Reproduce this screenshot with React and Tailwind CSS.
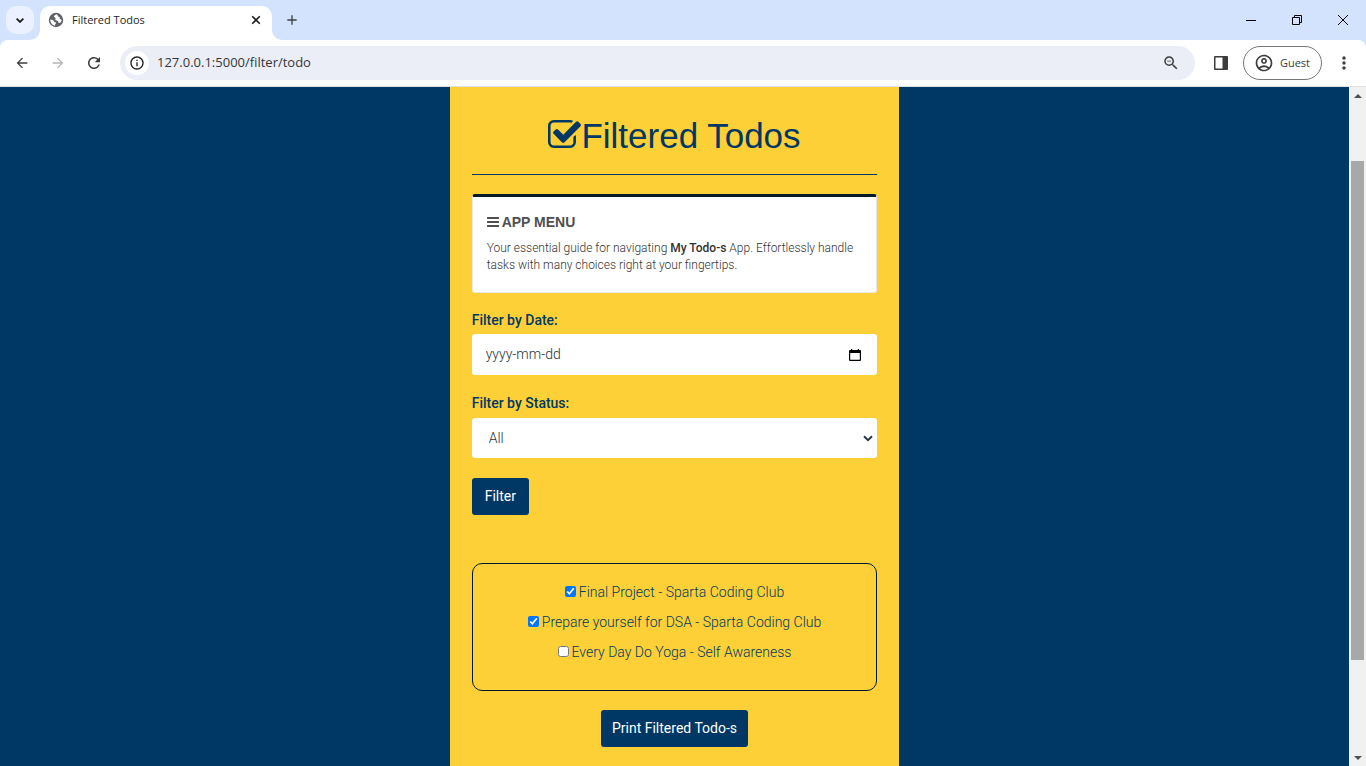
import React, { useState } from "react";
import {
  MdAdd,
  MdArrowBack,
  MdArrowForward,
  MdInfoOutline,
  MdMoreVert,
  MdOutlineAccountCircle,
  MdRefresh,
  MdZoomOut,
} from "react-icons/md";

const initialTodos = [
  { id: "final", title: "Final Project - Sparta Coding Club", done: true },
  { id: "dsa", title: "Prepare yourself for DSA - Sparta Coding Club", done: true },
  { id: "yoga", title: "Every Day Do Yoga - Self Awareness", done: false },
];

function GlobeIcon() {
  return (
    <svg viewBox="0 0 16 16" className="size-4" aria-hidden="true">
      <circle cx="8" cy="8" r="7.200" fill="#5f6368" />
      <path
        fill="#fff"
        d="M8.600 2.200c-1.700.6-2.900 1.600-2.600 2.600.3.900 1.500.6 1.600 1.500.1.700-.5 1-.2 1.600.4.700 1.800.3 2.600 1 .6.600 0 1.500.8 1.900.7.300 1.500-.3 2.100-.9.500-.6.800-1.300.8-2.100l-1-.4-1.100-.9.300-1.300-1.300-.3-.5-.9Z"
      />
      <path fill="#fff" d="M2.200 7.400c1 .1 2.200.3 3 .9.700.600.6 1.400 1.300 1.700.6.300 1.300.1 1.500.7.200.700-.7 1.100-.9 1.800-.1.400 0 .8 0 1.200-2.800-.5-4.900-2.900-4.900-6.300Z" />
    </svg>
  );
}

function TabStrip() {
  return (
    <header className="flex h-10 shrink-0 items-center bg-[#d3e2fd] pl-1.5">
      <button
        type="button"
        aria-label="Search tabs"
        className="flex size-7 items-center justify-center rounded-[10px] bg-[#ebf1fe] text-[#1f1f1f]"
      >
        <svg viewBox="0 0 8 5" className="h-[5px] w-2" fill="none" stroke="currentColor" strokeWidth="1.8">
          <path d="M.6.6 4 4 7.400.6" />
        </svg>
      </button>
      <div className="relative ml-1.5 flex h-[34px] w-[232px] items-center self-end rounded-t-[10px] bg-white pr-2.5 pb-1.5 pl-2">
        <svg viewBox="0 0 10 10" className="absolute bottom-0 -left-2.5 size-2.5 fill-white">
          <path d="M10 0v10H0A10 10 0 0 0 10 0Z" />
        </svg>
        <svg viewBox="0 0 10 10" className="absolute -right-2.5 bottom-0 size-2.5 fill-white">
          <path d="M0 0v10h10A10 10 0 0 1 0 0Z" />
        </svg>
        <GlobeIcon />
        <span className="ml-2 flex-1 text-[11px] text-[#1f1f1f]">Filtered Todos</span>
        <button type="button" aria-label="Close tab" className="text-[#1f1f1f]">
          <svg viewBox="0 0 12 12" className="size-3" stroke="currentColor" strokeWidth="1.6">
            <path d="m2.200 2.200 7.600 7.600M9.800 2.200 2.200 9.800" />
          </svg>
        </button>
      </div>
      <button type="button" aria-label="New tab" className="ml-3 text-[#3c4043]">
        <MdAdd className="size-4" />
      </button>
      <div className="ml-auto flex items-center text-black">
        <button type="button" aria-label="Minimize" className="flex h-10 w-[46px] items-center justify-center">
          <svg viewBox="0 0 10 10" className="size-2.5" stroke="currentColor">
            <path d="M0 5.500h10" />
          </svg>
        </button>
        <button type="button" aria-label="Restore" className="flex h-10 w-[46px] items-center justify-center">
          <svg viewBox="0 0 10 10" className="size-2.5" fill="none" stroke="currentColor">
            <path d="M.5 2.500h7v7h-7zM2.500 2.500v-2h7v7h-2" />
          </svg>
        </button>
        <button type="button" aria-label="Close window" className="flex h-10 w-[46px] items-center justify-center">
          <svg viewBox="0 0 10 10" className="size-2.5" fill="none" stroke="currentColor">
            <path d="m0 0 10 10M10 0 0 10" />
          </svg>
        </button>
      </div>
    </header>
  );
}

function Toolbar() {
  return (
    <div className="shrink-0 bg-[#d3e2fd]">
      <nav
        aria-label="Browser toolbar"
        className="flex h-[47px] items-center rounded-t-lg border-b border-[#dfe0e3] bg-white pr-3 pl-3.5 text-[#3c3c3c]"
      >
        <button type="button" aria-label="Back">
          <MdArrowBack className="size-4" />
        </button>
        <button type="button" aria-label="Forward" className="ml-5 text-[#b4b5b6]">
          <MdArrowForward className="size-4" />
        </button>
        <button type="button" aria-label="Reload" className="ml-[19px]">
          <MdRefresh className="size-[18px]" />
        </button>
        <div className="ml-[17px] flex h-[34px] flex-1 items-center rounded-full bg-[#ebeef7] pr-[15px] pl-[5px]">
          <button
            type="button"
            aria-label="Site information"
            className="flex size-6 items-center justify-center rounded-full bg-white text-[#1f1f1f]"
          >
            <MdInfoOutline className="size-4" />
          </button>
          <input
            aria-label="Address"
            defaultValue="127.0.0.1:5000/filter/todo"
            className="ml-2 min-w-0 flex-1 bg-transparent text-[13px] text-[#33363a] outline-none"
          />
          <button type="button" aria-label="Zoom">
            <MdZoomOut className="size-[18px]" />
          </button>
        </div>
        <button type="button" aria-label="Side panel" className="ml-[19px]">
          <svg viewBox="0 0 14 14" className="size-3.5" fill="currentColor">
            <path fillRule="evenodd" d="M1 0h12a1 1 0 0 1 1 1v12a1 1 0 0 1-1 1H1a1 1 0 0 1-1-1V1a1 1 0 0 1 1-1Zm.5 1.500v11H8.500v-11Z" />
          </svg>
        </button>
        <button
          type="button"
          className="ml-[15px] flex h-[34px] items-center gap-1.5 rounded-full border border-[#747775] pr-[11px] pl-2.5 text-[11px]"
        >
          <MdOutlineAccountCircle className="size-5" />
          Guest
        </button>
        <button type="button" aria-label="Browser menu" className="ml-3">
          <MdMoreVert className="size-5" />
        </button>
      </nav>
    </div>
  );
}

function ScrollBar() {
  return (
    <div aria-hidden="true" className="flex w-[17px] shrink-0 flex-col bg-[#f1f1f1] px-0.5 text-[#505050]">
      <div className="flex h-[17px] items-center justify-center">
        <svg viewBox="0 0 8 4" className="h-1 w-2" fill="currentColor">
          <path d="M4 0 8 4H0Z" />
        </svg>
      </div>
      <div className="flex-[57]" />
      <div className="flex-[499] bg-[#a8a8a8]" />
      <div className="flex-[89]" />
      <div className="flex h-[17px] items-center justify-center">
        <svg viewBox="0 0 8 4" className="h-1 w-2" fill="currentColor">
          <path d="M0 0h8L4 4Z" />
        </svg>
      </div>
    </div>
  );
}

function CheckSquareIcon() {
  return (
    <svg viewBox="64 128 1664 1408" className="mb-1 h-7 w-[33px]" fill="currentColor" aria-hidden="true">
      <path d="M1472 930v318q0 119-84.500 203.500t-203.500 84.500h-832q-119 0-203.500-84.500t-84.500-203.500v-832q0-119 84.500-203.500t203.500-84.500h832q63 0 117 25 15 7 18 23 3 17-9 29l-49 49q-10 10-23 10-3 0-9-2-23-6-45-6h-832q-66 0-113 47t-47 113v832q0 66 47 113t113 47h832q66 0 113-47t47-113v-254q0-13 9-22l64-64q10-10 23-10 6 0 12 3 20 8 20 29zm231-489l-814 814q-24 24-57 24t-57-24l-430-430q-24-24-24-57t24-57l110-110q24-24 57-24t57 24l263 263 647-647q24-24 57-24t57 24l110 110q24 24 24 57t-24 57z" />
    </svg>
  );
}

function BarsIcon() {
  return (
    <svg viewBox="0 0 12 10" className="h-2.5 w-3" fill="currentColor" aria-hidden="true">
      <rect width="12" height="2" rx=".5" />
      <rect y="4" width="12" height="2" rx=".5" />
      <rect y="8" width="12" height="2" rx=".5" />
    </svg>
  );
}

function FilterForm() {
  return (
    <form onSubmit={(e) => e.preventDefault()} className="mt-[17px] flex flex-col items-start">
      <label htmlFor="date" className="text-sm font-medium">
        Filter by Date:
      </label>
      <div className="mt-1 flex h-[41px] w-full items-center rounded-[3px] bg-white pr-4 pl-3.5">
        <input
          id="date"
          placeholder="yyyy-mm-dd"
          className="min-w-0 flex-1 bg-transparent pb-0.5 text-sm font-light text-[#363636] outline-none placeholder:text-[#28323c]"
        />
        <button type="button" aria-label="Open calendar" className="text-black">
          <svg viewBox="0 0 12 12" className="size-3" fill="currentColor">
            <path fillRule="evenodd" d="M2 0h1.200v1h5.600V0H10v1h1a1 1 0 0 1 1 1v9a1 1 0 0 1-1 1H1a1 1 0 0 1-1-1V2a1 1 0 0 1 1-1h1ZM1.200 4v6.800h9.600V4Z" />
          </svg>
        </button>
      </div>
      <label htmlFor="status" className="mt-[18px] text-sm font-medium">
        Filter by Status:
      </label>
      <div className="mt-[5px] grid w-full items-center">
        <select
          id="status"
          className="col-start-1 row-start-1 h-10 w-full appearance-none rounded-[3px] bg-white px-[17px] text-sm font-light text-[#28323c] outline-none"
        >
          <option>All</option>
          <option>Done</option>
          <option>Pending</option>
        </select>
        <svg
          viewBox="0 0 10 7"
          className="pointer-events-none col-start-1 row-start-1 mr-1 h-[7px] w-2.5 justify-self-end"
          fill="none"
          stroke="#28384a"
          strokeWidth="2"
        >
          <path d="M1 1.200 5 5.200 9 1.200" />
        </svg>
      </div>
      <button type="submit" className="mt-5 h-[37px] rounded-[3px] bg-[#003865] px-[13px] pb-0.5 text-sm text-white">
        Filter
      </button>
    </form>
  );
}

function TodoPage() {
  const [todos, setTodos] = useState(initialTodos);
  const toggle = (id) => setTodos(todos.map((t) => (t.id === id ? { ...t, done: !t.done } : t)));

  return (
    <main className="flex min-w-0 flex-1 justify-center overflow-hidden bg-[#003865] font-['Roboto',sans-serif] text-[#003865]">
      <section className="flex w-1/3 flex-col bg-[#fcd036] px-[22px] pt-7">
        <h1 className="flex h-[42px] items-center justify-center font-['Liberation_Sans',Arial,sans-serif] text-[35px]">
          <CheckSquareIcon />
          Filtered Todos
        </h1>
        <hr className="mt-[17px] border-[#003865]" />
        <article className="mt-[19px] rounded-[3px] border border-t-3 border-[#e7eaec] border-t-[#001a2c] bg-white px-3.5 pt-[15px] pb-[18px] text-[#4f4f4f]">
          <h2 className="flex h-5 items-center gap-[3px] font-['Liberation_Sans',Arial,sans-serif] text-sm font-bold">
            <BarsIcon />
            APP MENU
          </h2>
          <p className="mt-2 text-xs leading-[17px] font-light text-[#333]">
            Your essential guide for navigating <strong className="font-medium">My Todo-s</strong> App. Effortlessly
            handle tasks with many choices right at your fingertips.
          </p>
        </article>
        <FilterForm />
        <ul className="mt-12 flex h-32 flex-col items-center rounded-[10px] border border-[#001a2c] pt-[13px]">
          {todos.map((todo) => (
            <li key={todo.id} className="flex h-[30px] items-center gap-[3px]">
              <input
                id={todo.id}
                type="checkbox"
                checked={todo.done}
                onChange={() => toggle(todo.id)}
                className="mb-0.5 size-[11px]"
              />
              <label htmlFor={todo.id} className="text-sm font-light">
                {todo.title}
              </label>
            </li>
          ))}
        </ul>
        <button
          type="button"
          className="mt-[19px] h-[37px] self-center rounded-[3px] bg-[#003865] px-[11px] pb-0.5 text-sm text-white"
        >
          Print Filtered Todo-s
        </button>
      </section>
    </main>
  );
}

export default function App() {
  return (
    <div className="flex h-screen flex-col overflow-hidden font-['Open_Sans','Noto_Sans',sans-serif]">
      <TabStrip />
      <Toolbar />
      <div className="flex min-h-0 flex-1">
        <TodoPage />
        <ScrollBar />
      </div>
    </div>
  );
}
